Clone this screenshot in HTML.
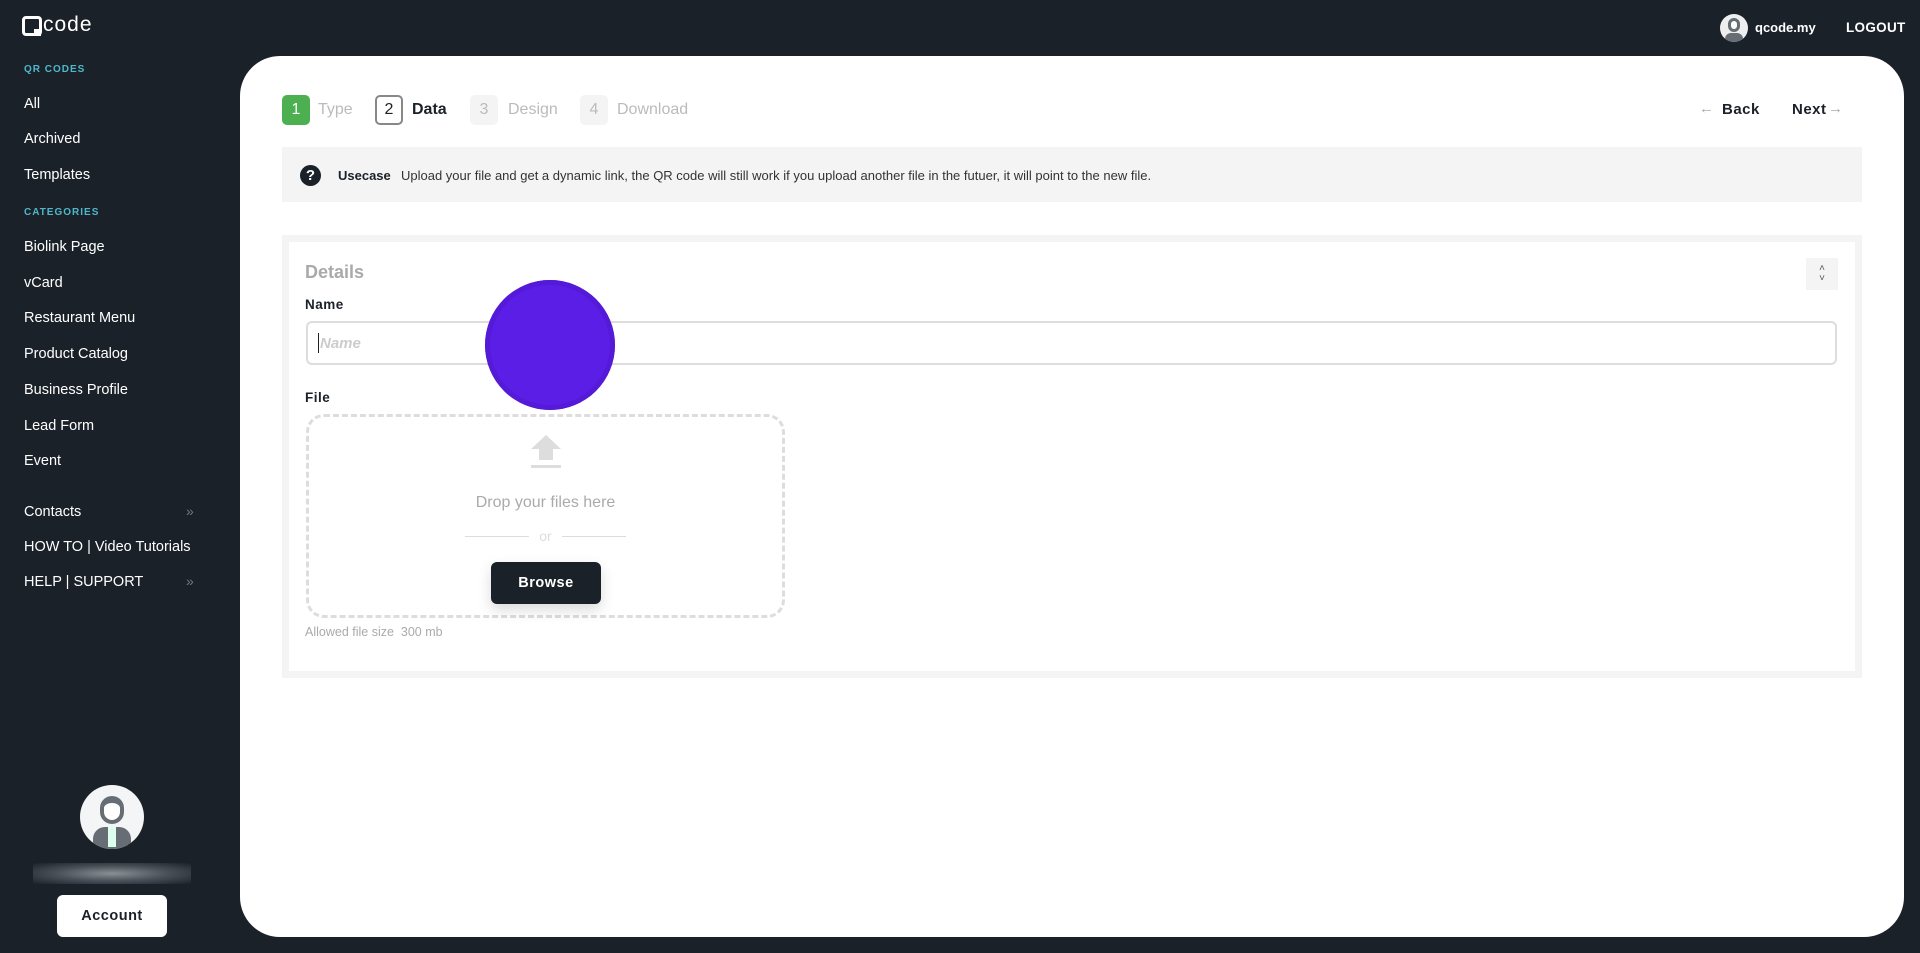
<!DOCTYPE html>
<html><head><meta charset="utf-8"><style>
*{box-sizing:border-box;margin:0;padding:0}
body{width:1920px;height:953px;background:#1b2129;font-family:"Liberation Sans",sans-serif;position:relative;overflow:hidden}
.a{position:absolute}
.nav{color:#fff;font-size:14.5px;left:24px}
.sec{color:#4fb7c9;font-size:10px;font-weight:bold;letter-spacing:1px;left:24px}
.card{left:240px;top:56px;width:1664px;height:881px;background:#fff;border-radius:40px}
.box{width:28px;height:30px;border-radius:5px;font-size:16px;text-align:center;line-height:30px}
.st{font-size:16px;line-height:30px}
</style></head><body>
<!-- logo -->
<div class="a" style="left:22px;top:16px;width:20px;height:20px;border:3px solid #fff;border-radius:4px"></div>
<div class="a" style="left:34px;top:29px;width:7px;height:7px;background:#fff"></div>
<div class="a" style="left:43px;top:13px;color:#fff;font-size:21px;letter-spacing:1px">code</div>

<div class="a sec" style="top:64px">QR CODES</div>
<div class="a nav" style="top:96px">All</div>
<div class="a nav" style="top:131px">Archived</div>
<div class="a nav" style="top:167px">Templates</div>
<div class="a sec" style="top:207px">CATEGORIES</div>
<div class="a nav" style="top:239px">Biolink Page</div>
<div class="a nav" style="top:275px">vCard</div>
<div class="a nav" style="top:310px">Restaurant Menu</div>
<div class="a nav" style="top:346px">Product Catalog</div>
<div class="a nav" style="top:382px">Business Profile</div>
<div class="a nav" style="top:418px">Lead Form</div>
<div class="a nav" style="top:453px">Event</div>
<div class="a nav" style="top:504px">Contacts</div>
<div class="a nav" style="top:539px">HOW TO | Video Tutorials</div>
<div class="a nav" style="top:574px">HELP | SUPPORT</div>
<div class="a" style="left:186px;top:503px;color:#777;font-size:14px">»</div>
<div class="a" style="left:186px;top:573px;color:#777;font-size:14px">»</div>

<!-- bottom avatar -->
<div class="a" style="left:80px;top:785px;width:64px;height:64px;border-radius:50%;background:#f4f5f6;overflow:hidden">
<div class="a" style="left:20px;top:11px;width:24px;height:28px;border-radius:12px;background:#fff;border:4px solid #666d74;border-top-width:7px"></div>
<div class="a" style="left:13px;top:42px;width:38px;height:26px;border-radius:12px 12px 0 0;background:#666d74"></div>
<div class="a" style="left:28px;top:42px;width:8px;height:20px;background:#dfe"></div>
</div>
<div class="a" style="left:33px;top:863px;width:158px;height:21px;background:radial-gradient(ellipse at center,#8a9096 0%,#4a5057 50%,#1b2129 100%)"></div>
<div class="a" style="left:57px;top:895px;width:110px;height:42px;background:#fff;border-radius:6px;text-align:center;line-height:42px;font-weight:bold;font-size:14.5px;color:#1b2129;letter-spacing:.5px">Account</div>

<!-- header right -->
<div class="a" style="left:1720px;top:14px;width:28px;height:28px;border-radius:50%;background:#eee;overflow:hidden">
<div class="a" style="left:8px;top:4px;width:12px;height:14px;border-radius:6px;background:#fff;border:3px solid #666d74"></div>
<div class="a" style="left:5px;top:19px;width:18px;height:12px;border-radius:6px 6px 0 0;background:#666d74"></div></div>
<div class="a" style="left:1755px;top:20px;color:#fff;font-weight:bold;font-size:13px">qcode.my</div>
<div class="a" style="left:1846px;top:20px;color:#fff;font-weight:bold;font-size:13.5px;letter-spacing:.3px">LOGOUT</div>

<div class="a card"></div>
<!-- steps -->
<div class="a box" style="left:282px;top:95px;background:#4caf50;color:#fff">1</div>
<div class="a st" style="left:318px;top:95px;color:#bbb">Type</div>
<div class="a box" style="left:375px;top:95px;border:2px solid #888;line-height:26px;color:#222">2</div>
<div class="a st" style="left:412px;top:95px;color:#1b2129;font-weight:bold">Data</div>
<div class="a box" style="left:470px;top:95px;background:#f4f4f4;color:#bbb">3</div>
<div class="a st" style="left:508px;top:95px;color:#bbb">Design</div>
<div class="a box" style="left:580px;top:95px;background:#f4f4f4;color:#bbb">4</div>
<div class="a st" style="left:617px;top:95px;color:#bbb">Download</div>
<div class="a" style="left:1699px;top:100px;color:#aaa;font-size:15px">←</div>
<div class="a" style="left:1722px;top:101px;color:#1b2129;font-size:15px;font-weight:bold;letter-spacing:.5px">Back</div>
<div class="a" style="left:1792px;top:101px;color:#1b2129;font-size:15px;font-weight:bold;letter-spacing:.5px">Next</div>
<div class="a" style="left:1828px;top:100px;color:#aaa;font-size:15px">→</div>

<!-- usecase -->
<div class="a" style="left:282px;top:147px;width:1580px;height:55px;background:#f4f4f4"></div>
<div class="a" style="left:300px;top:165px;width:21px;height:21px;border-radius:50%;background:#1b2129;color:#fff;font-weight:bold;font-size:15px;text-align:center;line-height:21px">?</div>
<div class="a" style="left:338px;top:168px;font-weight:bold;font-size:13px;color:#1b2129">Usecase</div>
<div class="a" style="left:401px;top:168px;font-size:13px;color:#333">Upload your file and get a dynamic link, the QR code will still work if you upload another file in the futuer, it will point to the new file.</div>

<!-- details -->
<div class="a" style="left:282px;top:235px;width:1580px;height:443px;border:7px solid #f4f4f4;background:#fff"></div>
<div class="a" style="left:305px;top:262px;color:#aaa;font-weight:bold;font-size:18px">Details</div>
<div class="a" style="left:1806px;top:258px;width:32px;height:32px;background:#f4f4f4;color:#555;font-size:10px;text-align:center;line-height:10px;padding-top:6px">˄<br>˅</div>
<div class="a" style="left:305px;top:297px;color:#1b2129;font-weight:bold;font-size:13.5px;letter-spacing:.5px">Name</div>
<div class="a" style="left:306px;top:321px;width:1531px;height:44px;border:2px solid #ddd;border-radius:6px"></div>
<div class="a" style="left:318px;top:333px;width:1px;height:20px;background:#222"></div>
<div class="a" style="left:320px;top:335px;color:#ccc;font-style:italic;font-weight:bold;font-size:15px">Name</div>
<div class="a" style="left:305px;top:390px;color:#1b2129;font-weight:bold;font-size:13.5px;letter-spacing:.5px">File</div>
<div class="a" style="left:306px;top:414px;width:479px;height:204px;border:3px dashed #ddd;border-radius:18px"></div>
<div class="a" style="left:531px;top:435px;width:0;height:0;border-left:15px solid transparent;border-right:15px solid transparent;border-bottom:14px solid #ddd"></div>
<div class="a" style="left:539px;top:448px;width:14px;height:12px;background:#ddd"></div>
<div class="a" style="left:531px;top:465px;width:30px;height:3px;background:#ddd"></div>
<div class="a" style="left:306px;top:494px;width:479px;text-align:center;color:#aaa;font-size:16px">Drop your files here</div>
<div class="a" style="left:465px;top:536px;width:64px;height:1px;background:#ddd"></div>
<div class="a" style="left:562px;top:536px;width:64px;height:1px;background:#ddd"></div>
<div class="a" style="left:306px;top:528px;width:479px;text-align:center;color:#ddd;font-size:14px">or</div>
<div class="a" style="left:491px;top:562px;width:110px;height:42px;background:#1b2129;border-radius:6px;color:#fff;font-weight:bold;font-size:14.5px;text-align:center;line-height:42px;letter-spacing:.5px;box-shadow:0 6px 14px rgba(0,0,0,.15)">Browse</div>
<div class="a" style="left:305px;top:625px;color:#aaa;font-size:12.5px">Allowed file size&nbsp; 300 mb</div>

<!-- purple circle -->
<div class="a" style="left:485px;top:280px;width:130px;height:130px;border-radius:50%;background:#5a1ee6;box-shadow:inset 0 0 0 5px #541ad8"></div>
</body></html>
